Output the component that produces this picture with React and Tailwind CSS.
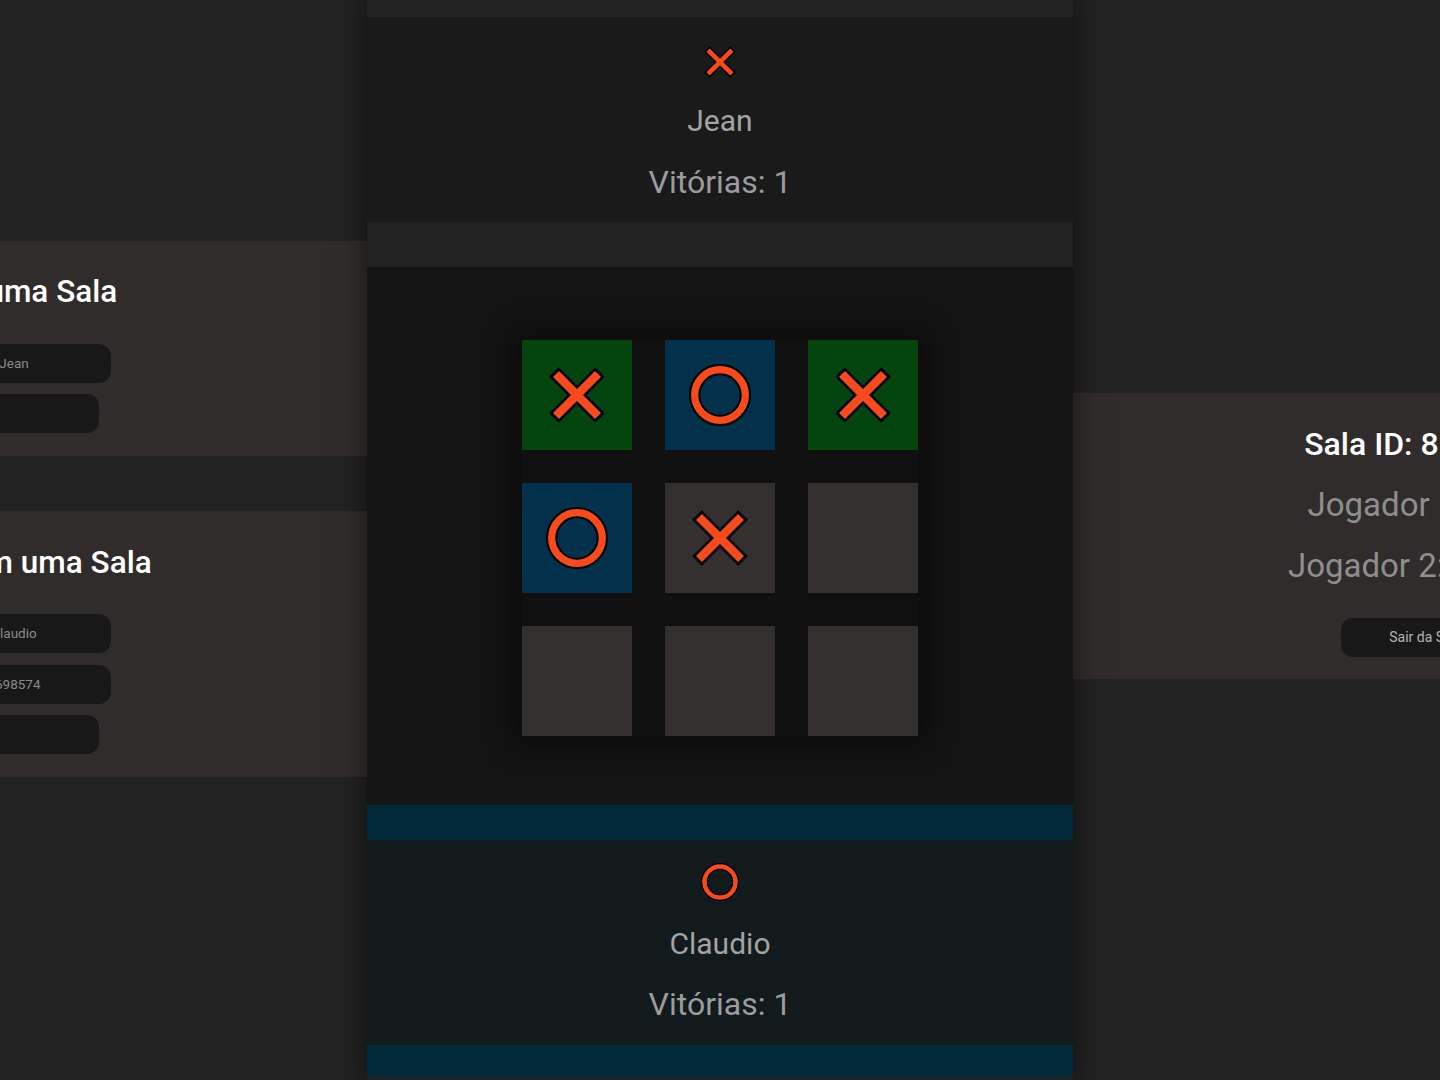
import React from "react";

const ORANGE = "#f94a1c";

function XMark({ size = 56 }) {
  return (
    <svg width={size} height={size} viewBox="0 0 60 60">
      <line x1="7" y1="7" x2="53" y2="53" stroke="#000" strokeWidth="13.5" />
      <line x1="53" y1="7" x2="7" y2="53" stroke="#000" strokeWidth="13.5" />
      <line x1="9" y1="9" x2="51" y2="51" stroke={ORANGE} strokeWidth="8.5" />
      <line x1="51" y1="9" x2="9" y2="51" stroke={ORANGE} strokeWidth="8.5" />
    </svg>
  );
}

function OMark({ size = 60 }) {
  return (
    <svg width={size} height={size} viewBox="0 0 60 60">
      <circle cx="30" cy="30" r="24.5" fill="none" stroke="#000" strokeWidth="11" />
      <circle cx="30" cy="30" r="24.5" fill="none" stroke={ORANGE} strokeWidth="7" />
    </svg>
  );
}

const cells = [
  { bg: "bg-[#03440f]", m: "X" },
  { bg: "bg-[#03304a]", m: "O" },
  { bg: "bg-[#03440f]", m: "X" },
  { bg: "bg-[#03304a]", m: "O" },
  { bg: "bg-[#322f2e]", m: "X" },
  { bg: "bg-[#322f2e]", m: "" },
  { bg: "bg-[#322f2e]", m: "" },
  { bg: "bg-[#322f2e]", m: "" },
  { bg: "bg-[#322f2e]", m: "" },
];

export default function App() {
  return (
    <div
      className="w-[1440px] h-[1080px] overflow-hidden bg-[#222222]"
      style={{ fontFamily: "Roboto, 'Liberation Sans', sans-serif" }}
    >
      <div className="flex w-[2118px] -ml-[339px] h-[1080px]">
        {/* Left column */}
        <div className="w-[706px] shrink-0 flex flex-col pt-[241px]">
          <div className="h-[215px] bg-[#302c2b] flex flex-col items-center pt-[32px]">
            <h2 className="text-[31.5px] leading-[38px] font-medium text-white">Criar uma Sala</h2>
            <div className="mt-[33px] w-[194px] h-[39px] rounded-xl bg-[#181818] flex items-center justify-center text-[13.5px] text-[#8a8a8a]">
              Jean
            </div>
            <button className="mt-[11px] w-[170px] h-[39px] rounded-xl bg-[#181818]"></button>
          </div>
          <div className="mt-[55px] h-[266px] bg-[#302c2b] flex flex-col items-center pt-[33px]">
            <h2 className="text-[31.5px] leading-[38px] font-medium text-white">Entrar em uma Sala</h2>
            <div className="mt-[32px] w-[194px] h-[39px] rounded-xl bg-[#181818] flex items-center justify-center text-[13.5px] text-[#8a8a8a]">
              Claudio
            </div>
            <div className="mt-[12px] w-[194px] h-[39px] rounded-xl bg-[#181818] flex items-center justify-center text-[13.5px] text-[#8a8a8a]">
              8698574
            </div>
            <button className="mt-[11px] w-[170px] h-[39px] rounded-xl bg-[#181818]"></button>
          </div>
        </div>

        {/* Center column */}
        <div className="w-[706px] shrink-0 relative z-10 flex flex-col pt-[17px] bg-[#222222] shadow-[0_0_28px_rgba(0,0,0,0.55)]">
          <div className="h-[205px] bg-[#1a1a1a] flex flex-col items-center pt-[28px]">
            <XMark size={34} />
            <div className="mt-[24px] text-[30px] leading-[36px] text-[#a3a3a3]">Jean</div>
            <div className="mt-[24px] text-[32px] leading-[38px] text-[#9c9c9c]">Vitórias: 1</div>
          </div>
          <div className="h-[45px] bg-[#212121]"></div>
          <div className="h-[538px] bg-[#141414] flex items-start justify-center pt-[73px]">
            <div className="grid grid-cols-3 gap-[33px] bg-[#101010] shadow-[0_0_22px_12px_rgba(8,8,8,0.6)]">
              {cells.map((c, i) => (
                <div key={i} className={`w-[110px] h-[110px] ${c.bg} flex items-center justify-center`}>
                  {c.m === "X" && <XMark size={60} />}
                  {c.m === "O" && <OMark size={62} />}
                </div>
              ))}
            </div>
          </div>
          <div className="h-[35px] bg-[#032a39]"></div>
          <div className="h-[205px] bg-[#121a1c] flex flex-col items-center pt-[23px]">
            <OMark size={38} />
            <div className="mt-[25px] text-[30px] leading-[36px] text-[#a3a3a3]">Claudio</div>
            <div className="mt-[23px] text-[32px] leading-[38px] text-[#9c9c9c]">Vitórias: 1</div>
          </div>
          <div className="h-[32px] bg-[#032a39]"></div>
        </div>

        {/* Right column */}
        <div className="w-[706px] shrink-0 flex flex-col pt-[393px]">
          <div className="h-[286px] bg-[#302c2b] flex flex-col items-center pt-[32px]">
            <h2 className="text-[32px] leading-[38px] font-medium text-white">Sala ID: 8698574</h2>
            <div className="mt-[23px] text-[33px] leading-[38px] text-[#8e8e8e]">Jogador 1: Jean</div>
            <div className="mt-[23px] text-[33px] leading-[38px] text-[#8e8e8e]">Jogador 2: Claudio</div>
            <button className="mt-[33px] w-[170px] h-[39px] rounded-xl bg-[#181818] text-[14px] text-[#b5b5b5]">
              Sair da Sala
            </button>
          </div>
        </div>
      </div>
    </div>
  );
}
